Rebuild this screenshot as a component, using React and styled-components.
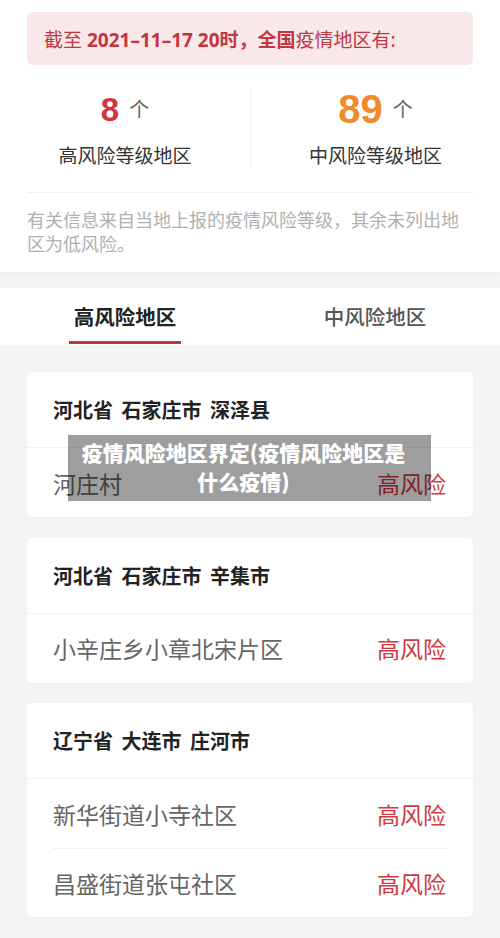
import React from "react";
import styled, { createGlobalStyle } from "styled-components";

const GlobalStyle = createGlobalStyle`
  html, body {
    margin: 0;
    padding: 0;
    background: #f5f5f5;
    font-family: "Noto Sans CJK SC", "Noto Sans", sans-serif;
  }
`;

const stats = [
  { count: 8, label: "高风险等级地区", color: "#d0363d", size: 33 },
  { count: 89, label: "中风险等级地区", color: "#f08a2a", size: 40 },
];

const groups = [
  { title: "河北省 石家庄市 深泽县", items: ["河庄村"] },
  { title: "河北省 石家庄市 辛集市", items: ["小辛庄乡小章北宋片区"] },
  { title: "辽宁省 大连市 庄河市", items: ["新华街道小寺社区", "昌盛街道张屯社区"] },
];

const App = () => {
  return (
    <Page>
      <GlobalStyle />
      <Summary>
        <Banner>
          截至 <strong>2021–11–17 20时，全国</strong>疫情地区有:
        </Banner>
        <Stats>
          {stats.map((s) => (
            <Stat key={s.label}>
              <CountLine>
                <Count color={s.color} size={s.size}>{s.count}</Count>
                <Unit>个</Unit>
              </CountLine>
              <StatLabel>{s.label}</StatLabel>
            </Stat>
          ))}
        </Stats>
        <Note>有关信息来自当地上报的疫情风险等级，其余未列出地区为低风险。</Note>
      </Summary>

      <Tabs>
        <Tab active>高风险地区</Tab>
        <Tab>中风险地区</Tab>
      </Tabs>

      <List>
        {groups.map((g) => (
          <Card key={g.title}>
            <CardTitle>{g.title}</CardTitle>
            {g.items.map((item) => (
              <Row key={item}>
                <Place>{item}</Place>
                <Level>高风险</Level>
              </Row>
            ))}
          </Card>
        ))}
      </List>

      <Caption>疫情风险地区界定(疫情风险地区是什么疫情)</Caption>
    </Page>
  );
};
export default App;

const Page = styled.div`
  position: relative;
  width: 500px;
  height: 938px;
  overflow: hidden;
  background: #f5f5f5;
`;

const Summary = styled.section`
  background: #fff;
  padding: 12px 27px 0;
  height: 260px;
  box-shadow: 0 2px 6px rgba(0, 0, 0, 0.04);
`;

const Banner = styled.div`
  height: 53px;
  display: flex;
  align-items: center;
  padding: 0 17px;
  background: #f9e8ea;
  border-radius: 5px;
  color: #c23640;
  font-family: "Noto Sans", "Noto Sans CJK SC", sans-serif;
  font-size: 19px;
  white-space: pre;

  strong {
    font-weight: 700;
  }
`;

const Stats = styled.div`
  display: grid;
  grid-template-columns: 1fr 1fr;
  margin: 0 -27px;
  padding: 24px 0 26px;
  position: relative;

  &::after {
    content: "";
    position: absolute;
    left: 27px;
    right: 27px;
    bottom: 0;
    border-bottom: 1px solid #f0f0f0;
  }
`;

const Stat = styled.div`
  display: flex;
  flex-direction: column;
  align-items: center;
  height: 78px;
  justify-content: space-between;

  & + & {
    border-left: 1px solid #f2f2f2;
  }
`;

const CountLine = styled.div`
  display: flex;
  align-items: center;
  height: 40px;
  gap: 10px;
`;

const Count = styled.span`
  color: ${(p) => p.color};
  font-family: "Liberation Sans", Arial, sans-serif;
  font-weight: 700;
  font-size: ${(p) => p.size}px;
  line-height: 1;
`;

const Unit = styled.span`
  color: #666;
  font-size: 20px;
  line-height: 1;
`;

const StatLabel = styled.div`
  color: #333;
  font-size: 19px;
  line-height: 24px;
`;

const Note = styled.p`
  margin: 0;
  padding: 14px 0 0;
  color: #b0b0b0;
  font-size: 18px;
  line-height: 24px;
`;

const Tabs = styled.nav`
  display: grid;
  grid-template-columns: 1fr 1fr;
  margin-top: 16px;
  height: 57px;
  background: #fff;
`;

const Tab = styled.div`
  position: relative;
  display: flex;
  justify-content: center;
  padding-top: 14px;
  font-size: 20.5px;
  line-height: 28px;
  color: ${(p) => (p.active ? "#222" : "#555")};
  font-weight: ${(p) => (p.active ? 700 : 500)};

  &::after {
    content: "";
    display: ${(p) => (p.active ? "block" : "none")};
    position: absolute;
    bottom: 1px;
    left: 50%;
    width: 112px;
    margin-left: -56px;
    height: 3px;
    background: #c0393f;
  }
`;

const List = styled.div`
  display: flex;
  flex-direction: column;
  gap: 20.5px;
  padding: 27px 27px 0;
`;

const Card = styled.div`
  background: #fff;
  border-radius: 5px;
  box-shadow: 0 1px 6px rgba(0, 0, 0, 0.03);
`;

const CardTitle = styled.div`
  box-sizing: border-box;
  height: 76px;
  display: flex;
  align-items: center;
  padding: 0 26px;
  font-size: 20px;
  font-weight: 700;
  word-spacing: 4px;
  color: #222;
  border-bottom: 1px solid #f3f3f3;
  white-space: pre;
`;

const Row = styled.div`
  box-sizing: border-box;
  height: 69px;
  margin: 0 27px 0 26px;
  display: flex;
  align-items: center;
  justify-content: space-between;
  font-size: 23px;

  & + & {
    border-top: 1px solid #f0f0f0;
  }
`;

const Place = styled.span`
  color: #666;
`;

const Level = styled.span`
  color: #d0383f;
`;

const Caption = styled.div`
  position: absolute;
  left: 68px;
  top: 435px;
  width: 363px;
  height: 66px;
  box-sizing: border-box;
  padding: 3px 20px 0 8px;
  background: rgba(0, 0, 0, 0.38);
  color: #fff;
  font-size: 21px;
  font-weight: 900;
  line-height: 29px;
  text-align: center;
`;
